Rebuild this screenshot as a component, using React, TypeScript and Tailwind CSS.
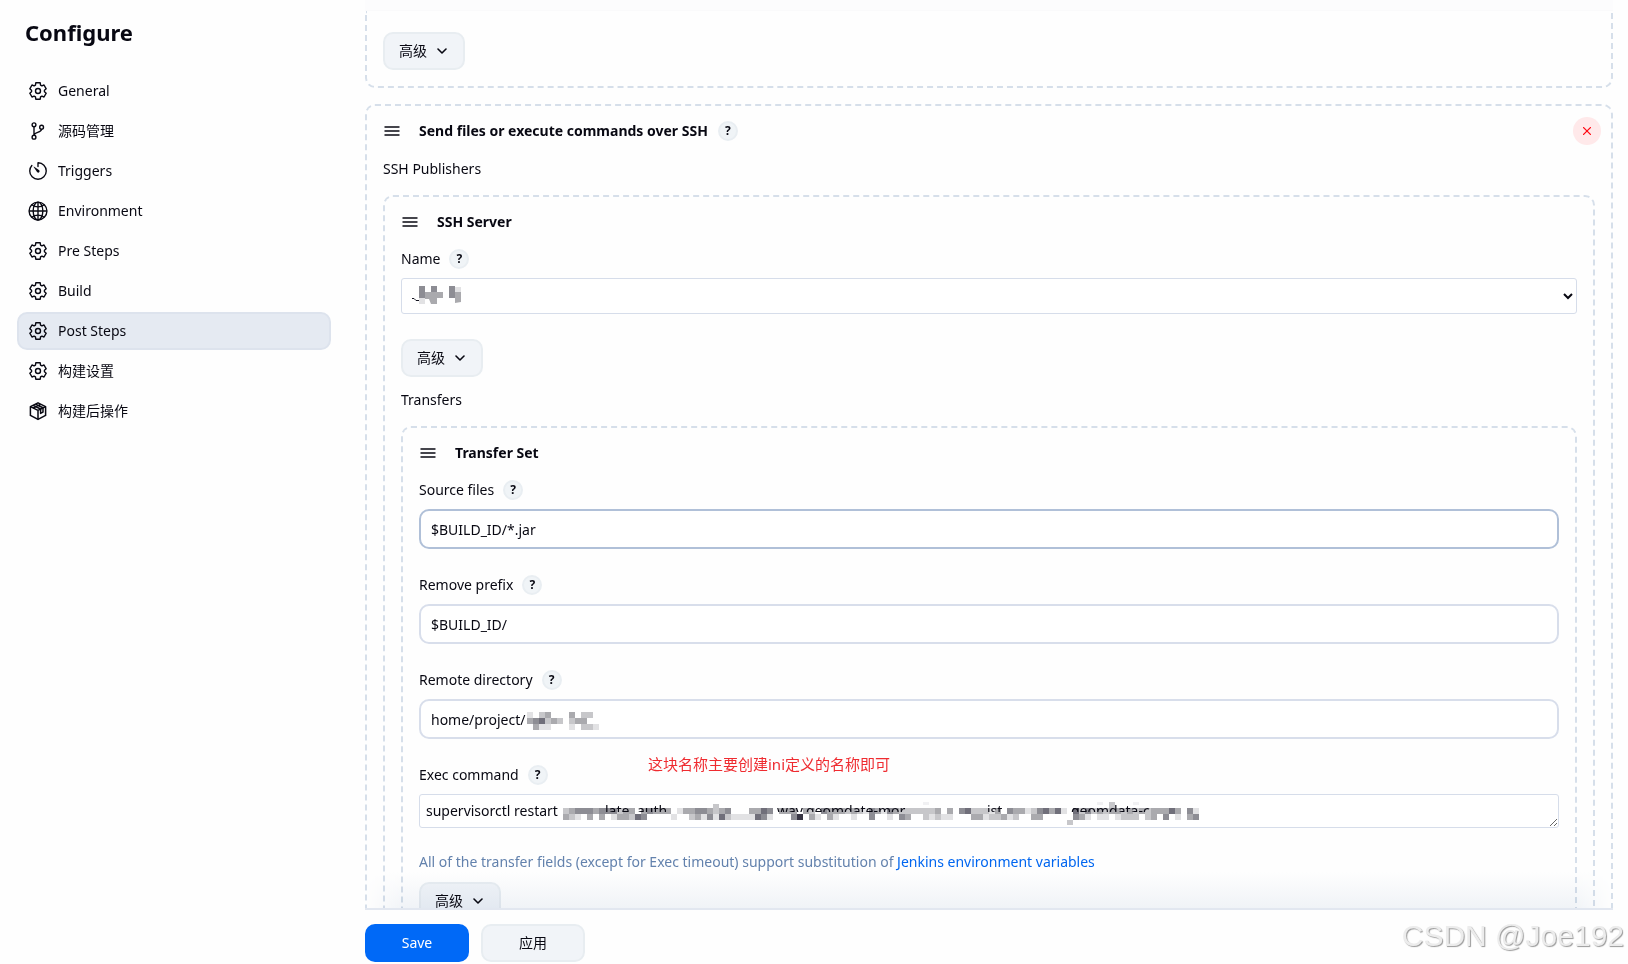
import React, { useState } from 'react';
import { IoTimerOutline, IoGlobeOutline } from 'react-icons/io5';

const iconStyle = "w-[22px] h-[22px] shrink-0";

// outline of a gear with six teeth, centred on 9,9
const gearPoints = [0, 60, 120, 180, 240, 300].flatMap((tooth) => (
    [[-23, 6.5], [-15, 8.5], [15, 8.5], [23, 6.5]].map(([turn, radius]) => {
        const angle = (tooth + turn - 90) * Math.PI / 180;
        return `${(9 + radius * Math.cos(angle)).toFixed(2)},${(9 + radius * Math.sin(angle)).toFixed(2)}`;
    })
)).join(' ');

function GearIcon(){
    return (
        <svg className={iconStyle} viewBox="-2 -2 22 22" fill="none" stroke="currentColor"
            strokeWidth="1.4" strokeLinejoin="round">
            <polygon points={gearPoints}/>
            <circle cx="9" cy="9" r="2.5"/>
        </svg>
    )
}

function BranchIcon(){
    return (
        <svg className={iconStyle} viewBox="-2 -2 22 22" fill="none" stroke="currentColor" strokeWidth="1.4">
            <circle cx="5" cy="2.8" r="1.9"/>
            <circle cx="5" cy="15.2" r="1.9"/>
            <circle cx="12.6" cy="5.2" r="1.9"/>
            <path d="M5 4.7v8.6M12.6 7.1c0 4-7.2 2.6-7.5 6"/>
        </svg>
    )
}

function PackageIcon(){
    return (
        <svg className={iconStyle} viewBox="-2 -2 22 22" fill="none" stroke="currentColor"
            strokeWidth="1.5" strokeLinejoin="round">
            <path d="M9 .8 16.6 4.6V13.4L9 17.4 1.4 13.4V4.6Z"/>
            <path d="M1.4 4.6 9 8.4l7.6-3.8M9 8.4v9"/>
            <path d="M4.1 3.4 11.6 7v4.4l2.4-1.3V5.8L6.5 2.2M4.2 6 11.5 2.3"/>
        </svg>
    )
}

const navItems = [
    { label: 'General',     icon: <GearIcon/> },
    { label: '源码管理',     icon: <BranchIcon/> },
    { label: 'Triggers',    icon: <IoTimerOutline className={iconStyle}/> },
    { label: 'Environment', icon: <IoGlobeOutline className={iconStyle}/> },
    { label: 'Pre Steps',   icon: <GearIcon/> },
    { label: 'Build',       icon: <GearIcon/> },
    { label: 'Post Steps',  icon: <GearIcon/> },
    { label: '构建设置',     icon: <GearIcon/> },
    { label: '构建后操作',   icon: <PackageIcon/> },
];

function Sidebar(){

    const [active, setActive] = useState<string>('Post Steps');

    return (
        <aside className="w-[365px] shrink-0 pl-[17px] pr-[34px] pt-4">
            <h1 className="pl-2 text-[22px] leading-8 font-bold">Configure</h1>

            <nav className="flex flex-col gap-[2px] mt-6">
                {navItems.map((item) => (
                    <button
                        key={item.label}
                        className={item.label === active
                            ? "flex items-center gap-[9px] h-[38px] px-2 rounded-[10px] border-2 border-[#dde3ed] bg-[#e5eaf2]"
                            : "flex items-center gap-[9px] h-[38px] px-2 rounded-[10px] border-2 border-transparent"}
                        onClick={() => { setActive(item.label); }}
                    >
                        {item.icon}
                        {item.label}
                    </button>
                ))}
            </nav>
        </aside>
    )
}

function HelpButton({ topic }: { topic: string }){
    return (
        <button
            aria-label={`Help for ${topic}`}
            className="flex items-center justify-center w-5 h-5 shrink-0 rounded-full
                    border-2 border-[#e9eef2] bg-[#f0f4f7] text-[12px] leading-4 font-bold"
        >
            ?
        </button>
    )
}

function AdvancedButton(){
    return (
        <button className="flex items-center gap-[10px] w-[82px] h-[38px] pl-[14px] rounded-[10px]
                        border-2 border-[#e8edf1] bg-[#f1f4f8]">
            高级
            <svg width="10" height="6" viewBox="0 0 10 6" fill="none" stroke="currentColor"
                strokeWidth="1.6" strokeLinecap="round" strokeLinejoin="round">
                <path d="M1 1l4 4 4-4"/>
            </svg>
        </button>
    )
}

type CardProps = { title: string, help?: boolean, removable?: boolean, children: React.ReactNode };

function Card({ title, help, removable, children }: CardProps){
    return (
        <section className="border-2 border-dashed border-[#d6dfea] rounded-[10px] px-4 pt-[11px] pb-4">
            <div className="flex items-center h-7 mb-[13px]">
                <svg className="ml-px mr-[19px]" width="16" height="10" viewBox="0 0 16 10"
                    stroke="currentColor" strokeWidth="1.4" strokeLinecap="round">
                    <path d="M1 1h14M1 5h14M1 9h14"/>
                </svg>
                <h2 className="font-bold mr-[10px]">{title}</h2>
                {help ? <HelpButton topic={title}/> : null}
                {removable ? (
                    <button
                        aria-label="Remove"
                        className="flex items-center justify-center w-7 h-7 ml-auto -mr-1.5 rounded-full
                                bg-[#ffe9ea] text-[#ff0a14]"
                    >
                        <svg width="8" height="8" viewBox="0 0 8 8" stroke="currentColor"
                            strokeWidth="1.3" strokeLinecap="round">
                            <path d="M.6.6l6.8 6.8M7.4.6L.6 7.4"/>
                        </svg>
                    </button>
                ) : null}
            </div>
            {children}
        </section>
    )
}

function FieldLabel({ id, text }: { id: string, text: string }){
    return (
        <div className="flex items-center gap-[9px] h-5 mb-[9px]">
            <label htmlFor={id}>{text}</label>
            <HelpButton topic={text}/>
        </div>
    )
}

// each digit is one mosaic cell, 0 is empty and 6 is the darkest
const shades = ['none', '#e2e2e4', '#c7c7ca', '#aaaaae', '#8d8d94', '#706f7a', '#383644'];

function Mosaic({ rows, top = 0 }: { rows: string[], top?: number }){
    return (
        <>
            {rows.map((row, y) => row.split('').map((c, x) => (
                c === '0' ? null :
                <rect key={`${x}-${y}`} x={x * 6} y={top + y * 6} width="6" height="6" fill={shades[Number(c)]}/>
            )))}
        </>
    )
}

const commandRows = [
    '2344434442330343330133443234000335403330320433323214314322222230304522213043312453510524232332323233353041',
    '3210303013325400001002314152111154100046031031001004001043002121100033122312003300000431011012220230401034',
];

function Field({ id, label, value, focused, redacted }:
    { id: string, label: string, value: string, focused?: boolean, redacted?: boolean }){
    return (
        <div className="mb-[26px]">
            <FieldLabel id={id} text={label}/>
            <div className="relative">
                <input
                    id={id}
                    type="text"
                    defaultValue={value}
                    className={focused
                        ? "block w-full h-10 px-[10px] rounded-[10px] border-2 border-[#b0c0d8] bg-white outline-none"
                        : "block w-full h-10 px-[10px] rounded-[10px] border-2 border-[#d8deeb] bg-white outline-none"}
                />
                {redacted ? (
                    <svg className="absolute left-[108px] top-[13px]" width="74" height="18" viewBox="0 0 74 18">
                        <Mosaic rows={['102300030220', '345232023300', '031100010221']}/>
                    </svg>
                ) : null}
            </div>
        </div>
    )
}

export default function App(){
    return (
        <div className="flex h-screen overflow-hidden bg-[#fefefe] text-[#080812] text-[14px] leading-5
                        font-['Noto_Sans','Noto_Sans_CJK_SC',sans-serif]">
            <Sidebar/>

            <main className="relative flex flex-col flex-1 min-w-0 pr-[15px]">
                <div className="h-[11px] shrink-0 border-b border-[#fafafb] bg-[#fcfcfd]"></div>

                <div className="relative flex-1 min-h-0 overflow-hidden">
                    <section className="border-2 border-t-0 border-dashed border-[#d6dfea] rounded-b-[10px]
                                        px-4 pt-[21px] pb-4 mb-4">
                        <AdvancedButton/>
                    </section>

                    <Card title="Send files or execute commands over SSH" help removable>
                        <div className="pt-px mb-4">SSH Publishers</div>

                        <Card title="SSH Server">
                            <FieldLabel id="server" text="Name"/>
                            <div className="relative mb-[25px]">
                                <select
                                    id="server"
                                    className="block w-full h-9 pl-2 rounded-[3px] border border-[#d6ddea] bg-white"
                                >
                                    <option></option>
                                </select>
                                <svg className="absolute left-[10px] top-2" width="52" height="18" viewBox="0 0 52 18">
                                    <path d="M1 12.5h2l2 2h3" stroke="#14141f" fill="none"/>
                                    <path d="M8 0h6v6h6V0h6v6h6v6h-6v6h-6l-2-5h-4l-6 1Z" fill="#aaaaae"/>
                                    <path d="M8 0h6v12H8ZM20 0h6v6h-6ZM38 0h6v12h-6Z" fill="#8d8d94"/>
                                    <path d="M8 12h6v6H8ZM44 1h6v5h-6Z" fill="#e2e2e4"/>
                                    <path d="M44 6h6v10l-6 1Z" fill="#aaaaae"/>
                                </svg>
                            </div>

                            <AdvancedButton/>
                            <div className="mt-[13px] mb-4">Transfers</div>

                            <Card title="Transfer Set">
                                <Field id="source" label="Source files" value="$BUILD_ID/*.jar" focused/>
                                <Field id="prefix" label="Remove prefix" value="$BUILD_ID/"/>
                                <Field id="remote" label="Remote directory" value="home/project/" redacted/>

                                <div className="relative">
                                    <FieldLabel id="command" text="Exec command"/>
                                    <div className="absolute left-[229px] -top-[11px] text-[15px] text-[#ef2b30]">
                                        这块名称主要创建ini定义的名称即可
                                    </div>
                                    <div className="relative mb-6">
                                        <textarea
                                            id="command"
                                            rows={1}
                                            defaultValue="supervisorctl restart"
                                            className="block w-full h-[34px] px-[6px] py-[6px] rounded-[3px] overflow-hidden
                                                    border border-[#d6ddea] bg-white outline-none"
                                        />
                                        <svg className="absolute left-[144px] top-2" width="648" height="24" viewBox="0 0 648 24">
                                            <defs>
                                                <clipPath id="tops"><rect width="648" height="10"/></clipPath>
                                            </defs>
                                            <Mosaic rows={commandRows} top={6}/>
                                            <path d="M150 2h6v4h-6ZM546 0h6v6h-6ZM504 18h6v5h-6Z" fill="#c7c7ca"/>
                                            <path d="M360 0h6v3h-6ZM534 0h6v3h-6ZM570 0h6v3h-6Z" fill="#f1f1f3"/>
                                            <g clipPath="url(#tops)" fill="#080812" fontSize="14">
                                                <text x="42" y="14">late</text>
                                                <text x="74" y="14">auth</text>
                                                <text x="214" y="14">way</text>
                                                <text x="243" y="14">geomdate-mor</text>
                                                <text x="424" y="14">ist</text>
                                                <text x="508" y="14">geomdata-c</text>
                                            </g>
                                        </svg>
                                    </div>
                                </div>

                                <p className="mb-[10px] text-[#6382ad]">
                                    All of the transfer fields (except for Exec timeout) support substitution of{' '}
                                    <a href="#env" className="text-[#0066f0]">Jenkins environment variables</a>
                                </p>
                                <AdvancedButton/>
                            </Card>
                        </Card>
                    </Card>

                    {/* shade above the action bar */}
                    <div className="absolute inset-x-0 bottom-0 h-9 bg-gradient-to-t from-[#f1f4f8] to-white mix-blend-multiply
                                    pointer-events-none [mask-image:linear-gradient(to_right,transparent,black_40px,black_calc(100%_-_40px),transparent)]">
                    </div>
                </div>

                <footer className="flex gap-3 shrink-0 border-t-2 border-[#e2e7f0] pt-[14px] pb-[2px]">
                    <button className="w-[104px] h-[38px] rounded-[10px] bg-[#0069f7] text-white">Save</button>
                    <button className="w-[104px] h-[38px] rounded-[10px] border-2 border-[#e8edf1] bg-[#f1f4f8]">应用</button>
                </footer>
            </main>

            <div className="absolute right-1 bottom-[10px] font-['Liberation_Sans',sans-serif] text-[30px] leading-9
                            text-[#ececec] [text-shadow:1px_1px_1px_#999999]">
                CSDN @Joe192
            </div>
        </div>
    )
}
